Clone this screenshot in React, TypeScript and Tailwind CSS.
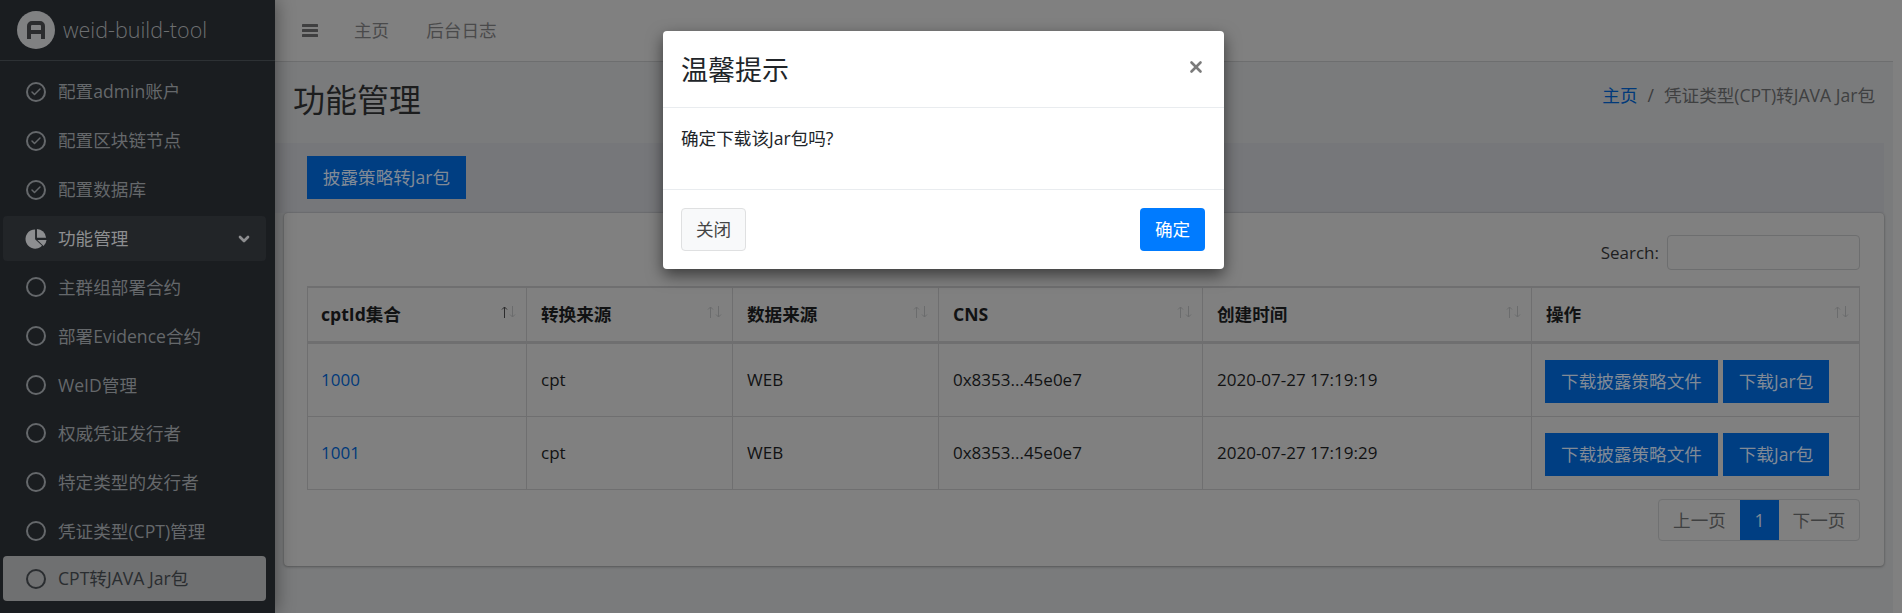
import React from 'react';
import { Check, ChevronDown, X } from 'lucide-react';

const cjk = '"Noto Sans CJK SC"';

const checked = ['配置admin账户', '配置区块链节点', '配置数据库'];
const subItems = ['主群组部署合约', '部署Evidence合约', 'WeID管理', '权威凭证发行者', '特定类型的发行者', '凭证类型(CPT)管理'];
const columns = [
  { title: 'cptId集合', w: 'w-[218px]', active: true },
  { title: '转换来源', w: 'w-[206px]' },
  { title: '数据来源', w: 'w-[206px]' },
  { title: 'CNS', w: 'w-[264px]' },
  { title: '创建时间', w: 'w-[329px]' },
  { title: '操作', w: 'w-[328px]' },
];
const rows = [
  { id: '1000', time: '2020-07-27 17:19:19' },
  { id: '1001', time: '2020-07-27 17:19:29' },
];

function NavIcon({ done, dark }: { done?: boolean; dark?: boolean }) {
  return (
    <span className={`flex h-5 w-5 shrink-0 items-center justify-center rounded-full border-2 ${dark ? 'border-[#2a2d30]' : 'border-[#65686b]'}`}>
      {done && <Check size={12} strokeWidth={3} className="text-[#65686b]" />}
    </span>
  );
}

function PieIcon() {
  return (
    <svg viewBox="0 0 24 24" className="h-[22px] w-[22px] shrink-0 fill-[#8d8e90]">
      <path d="M11 1.5a10.5 10.5 0 1 0 7.6 17.8L11 12.2Z" />
      <path d="M13 1a10.5 10.5 0 0 1 10 9.6H13Z" />
      <path d="M13.5 13h10a10.5 10.5 0 0 1-3.3 6.6Z" />
    </svg>
  );
}

function SortArrows({ active }: { active?: boolean }) {
  return (
    <svg viewBox="0 0 15 12" className="absolute right-2.5 top-[18px] h-3 w-[15px] fill-none stroke-[#6b6c6d]">
      <path d="M3.5 12V1M1 3.5 3.5 1 6 3.5" className={active ? 'stroke-[#2c2c2d]' : ''} />
      <path d="M11.5 0v11M9 8.5l2.5 2.5L14 8.5" />
    </svg>
  );
}

export default function App() {
  return (
    <div
      className="relative flex h-[613px] w-[1902px] overflow-hidden bg-[#808080] text-[17.6px] text-[#111213]"
      style={{ fontFamily: `"Open Sans", ${cjk}, sans-serif` }}
    >
      <aside className="relative z-10 w-[275px] shrink-0 bg-[#1a1d20] shadow-[0_0_18px_rgba(0,0,0,0.45)]">
        <div className="flex h-[61px] items-center border-b border-[#2d3134] pl-[17px]">
          <span className="flex h-[38px] w-[38px] items-center justify-center rounded-full bg-[#808182]">
            <svg viewBox="0 0 24 24" className="h-6 w-6 fill-none stroke-[#2b2c2e] stroke-[4]">
              <path d="M5 21V8a3 3 0 0 1 3-3h8a3 3 0 0 1 3 3v13M5 14h14" />
            </svg>
          </span>
          <span className="ml-[8px] text-[21.5px] font-light text-[#6d6f71]">weid-build-tool</span>
        </div>
        <nav className="pl-[3px] pr-[9px] pt-[6px] text-[#65686b]">
          {checked.map((item) => (
            <div key={item} className="flex h-[49px] items-center gap-[12px] pl-[23px]">
              <NavIcon done />
              <span>{item}</span>
            </div>
          ))}
          <div className="mt-[2px] flex h-[45px] items-center gap-[11px] rounded bg-[#222528] pl-[22px] pr-[14px] text-[#8d8e90]">
            <PieIcon />
            <span className="flex-1">功能管理</span>
            <ChevronDown size={16} strokeWidth={4} />
          </div>
          <div className="mt-[2px]">
            {subItems.map((item) => (
              <div key={item} className="flex h-[48.7px] items-center gap-[12px] pl-[23px]">
                <NavIcon />
                <span>{item}</span>
              </div>
            ))}
            <div className="mt-[1px] flex h-[45px] items-center gap-[12px] rounded bg-[#6f7071] pl-[23px] text-[#2a2d30]">
              <NavIcon dark />
              <span>CPT转JAVA Jar包</span>
            </div>
          </div>
        </nav>
      </aside>

      <main className="w-[1618px] shrink-0 bg-[#7a7b7c]">
        <header className="flex h-[62px] items-center border-b border-[#6d6e6f] bg-[#808080] pl-[27px] text-[#4a4a4b]">
          <svg viewBox="0 0 16 13" className="h-[13px] w-4 fill-[#3f3f40]">
            <rect y="0" width="16" height="3" rx="0.6" />
            <rect y="5" width="16" height="3" rx="0.6" />
            <rect y="10" width="16" height="3" rx="0.6" />
          </svg>
          <span className="ml-9">主页</span>
          <span className="ml-[37px]">后台日志</span>
        </header>

        <div className="flex h-[81px] items-start justify-between pl-[18px] pr-[18px]">
          <h1 className="mt-[14px] text-[32px] font-normal text-[#1c1d1e]">功能管理</h1>
          <div className="mt-[20px] text-[#3f4041]">
            <span className="text-[#00397a]">主页</span>
            <span className="mx-[10px] text-[#3c3c3d]">/</span>
            <span>凭证类型(CPT)转JAVA Jar包</span>
          </div>
        </div>

        <div className="mr-[9px] h-[70px] bg-[#76777a] pl-[32px] pt-[13px]">
          <button className="flex h-[43px] w-[159px] items-center justify-center bg-[#003e82] text-[#818a96]">
            披露策略转Jar包
          </button>
        </div>

        <section className="mx-[9px] h-[353px] rounded bg-[#808080] pl-[23px] pr-[24px] pt-[22px] shadow-[0_0_2px_rgba(0,0,0,0.2),0_1px_3px_rgba(0,0,0,0.25)]">
          <div className="flex h-[35px] items-center justify-end">
            <span className="text-[17px] text-[#1d1e1f]">Search:</span>
            <span className="ml-2 h-[35px] w-[193px] rounded border border-[#6d6e6f]" />
          </div>
          <div className="mt-[16px] w-[1553px] border-x border-t-2 border-[#6f6f70]">
            <div className="flex h-[56px] border-b-[3px] border-[#6f6f70] font-bold">
              {columns.map((c, i) => (
                <div key={c.title} className={`relative flex items-center ${c.w} ${i > 0 ? 'border-l border-[#6f6f70] pl-[14px]' : 'pl-[13px]'}`}>
                  {c.title}
                  <SortArrows active={c.active} />
                </div>
              ))}
            </div>
            {rows.map((r) => (
              <div key={r.id} className="flex h-[73px] border-b border-[#6f6f70] text-[17px]">
                <div className="flex w-[218px] items-center pl-[13px] text-[#00397a]">{r.id}</div>
                <div className="flex w-[206px] items-center border-l border-[#6f6f70] pl-[14px]">cpt</div>
                <div className="flex w-[206px] items-center border-l border-[#6f6f70] pl-[14px]">WEB</div>
                <div className="flex w-[264px] items-center border-l border-[#6f6f70] pl-[14px]">0x8353...45e0e7</div>
                <div className="flex w-[329px] items-center border-l border-[#6f6f70] pl-[14px]">{r.time}</div>
                <div className="flex w-[328px] items-center gap-[5px] border-l border-[#6f6f70] pl-[13px] pt-[3px] text-[17.6px] text-[#818a96]">
                  <button className="h-[43px] w-[173px] bg-[#003e82]">下载披露策略文件</button>
                  <button className="h-[43px] w-[106px] bg-[#003e82]">下载Jar包</button>
                </div>
              </div>
            ))}
          </div>
          <div className="mt-[9px] flex w-[1553px] justify-end">
            <div className="flex h-[42px] w-[202px] rounded border border-[#707172] text-[#3f4041]">
              <span className="flex w-[81px] items-center justify-center">上一页</span>
              <span className="flex w-[39px] items-center justify-center bg-[#003e82] text-[#818a96]">1</span>
              <span className="flex flex-1 items-center justify-center">下一页</span>
            </div>
          </div>
        </section>
      </main>

      <div className="absolute left-[663px] top-[31px] z-20 flex h-[238px] w-[561px] flex-col rounded bg-white text-[#212529] shadow-[0_6px_16px_rgba(0,0,0,0.55)]">
        <div className="flex h-[77px] items-center justify-between border-b border-[#e9ecef] pl-[18px] pr-[19px]">
          <span className="mt-[3px] text-[27px]">温馨提示</span>
          <X size={18} strokeWidth={3.5} className="-mt-1 text-[#7b7b7b]" />
        </div>
        <div className="h-[82px] border-b border-[#e9ecef] pl-[18px] pt-[17px]">确定下载该Jar包吗?</div>
        <div className="flex flex-1 items-center justify-between pl-[18px] pr-[19px]">
          <button className="h-[43px] w-[65px] rounded border border-[#dfe0e1] bg-[#f8f9fa] text-[#444]">关闭</button>
          <button className="h-[43px] w-[65px] rounded bg-[#007bff] text-white">确定</button>
        </div>
      </div>
    </div>
  );
}
